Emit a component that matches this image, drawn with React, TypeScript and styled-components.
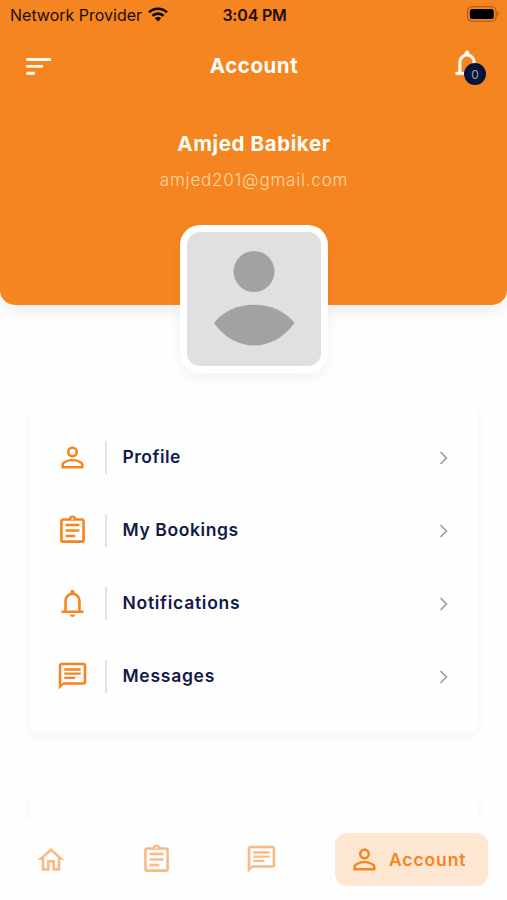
import React from "react";
import styled, { createGlobalStyle } from "styled-components";

const ORANGE = "#f58520";
const NAVY = "#131a48";

const GlobalStyle = createGlobalStyle`
  * { box-sizing: border-box; }
  html, body { margin: 0; background: #fefefe; }
  body { font-family: Inter, "Open Sans", sans-serif; overflow: hidden; }
`;

const Screen = styled.div`
  width: 507px;
  height: 900px;
  display: flex;
  flex-direction: column;
  overflow: hidden;
  background: #fefefe;
`;

const Header = styled.header`
  flex: none;
  height: 305px;
  background: ${ORANGE};
  border-radius: 0 0 15px 15px;
  box-shadow: 0 6px 14px rgba(20, 40, 50, 0.08);
`;

const StatusBar = styled.div`
  height: 30px;
  display: grid;
  grid-template-columns: 1fr auto 1fr;
  align-items: center;
  padding: 1px 8px 0 10px;
  color: #1d0d02;
`;

const Carrier = styled.div`
  display: flex;
  align-items: center;
  gap: 6px;
  svg { margin-top: -2px; }
`;

const BatterySlot = styled.div`
  display: flex;
  justify-content: flex-end;
  margin-top: -3px;
`;

const Label = styled.span<{ $size: number; $weight?: number; $spacing?: number; $color?: string }>`
  font-size: ${(p) => p.$size}px;
  font-weight: ${(p) => p.$weight ?? 400};
  letter-spacing: ${(p) => p.$spacing ?? 0}px;
  color: ${(p) => p.$color ?? "inherit"};
  line-height: 1.2;
  white-space: nowrap;
`;

const TitleBar = styled.div`
  height: 72px;
  display: grid;
  grid-template-columns: 1fr auto 1fr;
  align-items: center;
  padding: 0 21px 0 26px;
  color: #fffdf8;
`;

const Title = styled(Label)`
  margin: 1px 4px 0 0;
`;

const BellButton = styled.div`
  position: relative;
  justify-self: end;
  width: 36px;
  height: 36px;
  svg { display: block; }
`;

const Badge = styled.span`
  position: absolute;
  right: 0;
  bottom: -1px;
  width: 22px;
  height: 22px;
  border-radius: 50%;
  display: flex;
  align-items: center;
  justify-content: center;
  background: #091238;
  color: #9aa0b8;
  font-size: 12px;
`;

const Identity = styled.div`
  display: flex;
  flex-direction: column;
  align-items: center;
  gap: 13px;
  padding: 30px 0 0 1px;
  color: #fffdf8;
`;

const Avatar = styled.div`
  flex: none;
  align-self: center;
  width: 148px;
  height: 148px;
  margin-top: -80px;
  padding: 7px;
  border-radius: 20px;
  background: #fff;
  box-shadow: 0 5px 14px rgba(20, 40, 50, 0.05);
  z-index: 1;
  svg { display: block; border-radius: 13px; background: #e0e0e0; }
`;

const Content = styled.main`
  flex: 1;
  min-height: 0;
  overflow: hidden;
  display: flex;
  flex-direction: column;
  gap: 58px;
  padding: 30px 29px 0 30px;
`;

const Card = styled.section<{ $height: number }>`
  flex: none;
  height: ${(p) => p.$height}px;
  padding: 18px 22px 0 26px;
  border-radius: 10px;
  background: #fefefe;
  box-shadow: 0 4px 12px rgba(30, 45, 55, 0.04);
`;

const Row = styled.div`
  height: 73px;
  display: flex;
  align-items: center;
`;

const RowLabel = styled(Label)`
  margin-top: -2px;
`;

const Divider = styled.i`
  width: 1.5px;
  height: 33px;
  margin: 0 16px 0 16px;
  background: #e4e4e6;
`;

const Chevron = styled.svg`
  margin-left: auto;
  margin-top: 1px;
`;

const NavBar = styled.nav`
  flex: none;
  height: 80px;
  display: flex;
  align-items: flex-start;
  padding: 13px 19px 0 35px;
  background: #fefefe;
  z-index: 2;
`;

const NavItem = styled.div<{ $width: number }>`
  width: ${(p) => p.$width}px;
  height: 53px;
  display: flex;
  align-items: center;
  opacity: 0.55;
`;

const ActiveItem = styled.div`
  margin-left: auto;
  width: 153px;
  height: 53px;
  display: flex;
  align-items: center;
  gap: 8px;
  padding-left: 13px;
  border-radius: 12px;
  background: #fde7d2;
`;

const icons = {
  person:
    "M12 5.8a2.2 2.2 0 1 1 0 4.4 2.2 2.2 0 0 1 0-4.4m0 9c2.97 0 6.2 1.48 6.2 2.3v1.1H5.8v-1.1c0-.82 3.23-2.3 6.2-2.3M12 4C9.79 4 8 5.79 8 8s1.79 4 4 4 4-1.79 4-4-1.79-4-4-4zm0 9c-2.67 0-8 1.34-8 4v3h16v-3c0-2.66-5.33-4-8-4z",
  clipboard:
    "M7 15h7v1.9H7zm0-4h10v1.9H7zm0-4h10v1.9H7zM19 3h-4.18C14.4 1.84 13.3 1 12 1c-1.3 0-2.4.84-2.82 2H5c-1.1 0-2 .9-2 2v14c0 1.1.9 2 2 2h14c1.1 0 2-.9 2-2V5c0-1.1-.9-2-2-2zm-7-.25c.41 0 .75.34.75.75s-.34.75-.75.75-.75-.34-.75-.75.34-.75.75-.75zM19.1 19.1H4.9V4.9h14.2z",
  bell:
    "M4 18.9V17h2v-7q0-2.075 1.25-3.687T10.5 4.2v-.7q0-.625.438-1.062T12 2t1.063.438T13.5 3.5v.7q2 .5 3.25 2.113T18 10v7h2v1.9zm8 3q-.825 0-1.412-.587T10.1 20h3.8q0 .725-.487 1.313T12 21.9m-4.1-4.9h8.2V10q0-1.65-1.2-2.85T12 5.9 9.1 7.15 7.9 10z",
  chat:
    "M3.9 3.9h16.2v12.2H5.2l-1.3 1.3V3.9M4 2c-1.1 0-1.99.9-1.99 2L2 21.5 5.5 18H20c1.1 0 2-.9 2-2V4c0-1.1-.9-2-2-2H4zm2 10.1h8v1.75H6zm0-3.05h12v1.75H6zM6 6h12v1.75H6z",
  home: "M12 5.69l5 4.5V18h-2v-6H9v6H7v-7.81l5-4.5M12 3L2 12h3v8h6v-6h2v6h6v-8h3L12 3z",
};

type IconName = keyof typeof icons;

function Icon({
  name,
  size = 33,
  color = ORANGE,
  outline = 0,
}: {
  name: IconName;
  size?: number;
  color?: string;
  outline?: number;
}) {
  return (
    <svg
      width={size}
      height={size}
      viewBox="0 0 24 24"
      fill={color}
      stroke={outline ? color : "none"}
      strokeWidth={outline}
      fillRule={name === "home" ? "nonzero" : "evenodd"}
    >
      <path d={icons[name]} />
    </svg>
  );
}

const menu: { icon: IconName; label: string; spacing: number }[] = [
  { icon: "person", label: "Profile", spacing: 0.5 },
  { icon: "clipboard", label: "My Bookings", spacing: 0.6 },
  { icon: "bell", label: "Notifications", spacing: 0.73 },
  { icon: "chat", label: "Messages", spacing: 0.73 },
];

export default function App() {
  return (
    <>
      <GlobalStyle />
      <Screen>
        <Header>
          <StatusBar>
            <Carrier>
              <Label $size={16}>Network Provider</Label>
              <svg width="20" height="15" viewBox="0 0 20 15" fill="none" stroke="#120800" strokeWidth="2.7">
                <path d="M1.1 5.4a12.7 12.7 0 0 1 17.8 0M4.4 8.9a8 8 0 0 1 11.2 0" />
                <path d="M10 14.5 6.8 11.3a4.6 4.6 0 0 1 6.4 0z" fill="#120800" stroke="none" />
              </svg>
            </Carrier>
            <Label $size={16} $weight={600} $spacing={-0.2}>3:04 PM</Label>
            <BatterySlot>
              <svg width="33" height="16" viewBox="0 0 33 16">
                <rect x="1.5" y="0.7" width="28.6" height="14.6" rx="4.5" fill="none" stroke="#a05a1c" strokeWidth="1.1" />
                <rect x="3.8" y="3" width="24" height="10" rx="2.5" fill="#000" />
                <path d="M31.4 5.8c1.6.6 1.6 3.8 0 4.4z" fill="#a05a1c" />
              </svg>
            </BatterySlot>
          </StatusBar>
          <TitleBar>
            <svg width="25" height="17" viewBox="0 0 25 17" fill="#fffaf0">
              <path d="M.3 0H25v3H.3zM.3 7H17v2.8H.3zM.3 13.8h8.5v2.9H.3z" />
            </svg>
            <Title $size={20.5} $weight={700} $spacing={0.55}>Account</Title>
            <BellButton>
              <Icon name="bell" size={34} color="#fffdf8" outline={0.3} />
              <Badge>0</Badge>
            </BellButton>
          </TitleBar>
          <Identity>
            <Label $size={20.5} $weight={700} $spacing={0.6}>Amjed Babiker</Label>
            <Label $size={17} $weight={300} $spacing={0.8} $color="#ffd5a6">amjed201@gmail.com</Label>
          </Identity>
        </Header>
        <Avatar>
          <svg width="134" height="134" viewBox="0 0 134 134" fill="#a2a2a2">
            <circle cx="67" cy="39.5" r="20.5" />
            <path d="M27 91C45 66.5 89 66.5 107.5 91C86 121 48 121 27 91Z" />
          </svg>
        </Avatar>
        <Content>
          <Card $height={330}>
            {menu.map((item) => (
              <Row key={item.label}>
                <Icon name={item.icon} />
                <Divider />
                <RowLabel $size={17.5} $weight={600} $spacing={item.spacing} $color={NAVY}>
                  {item.label}
                </RowLabel>
                <Chevron width="24" height="24" viewBox="0 0 24 24" fill="none" stroke="#9c9ea2" strokeWidth="1.7">
                  <path d="M8.5 6l5.9 6-5.9 6" />
                </Chevron>
              </Row>
            ))}
          </Card>
          <Card $height={120} />
        </Content>
        <NavBar>
          <NavItem $width={105}><Icon name="home" size={32} /></NavItem>
          <NavItem $width={105}><Icon name="clipboard" /></NavItem>
          <NavItem $width={60}><Icon name="chat" /></NavItem>
          <ActiveItem>
            <Icon name="person" />
            <Label $size={17.5} $weight={600} $spacing={0.9} $color={ORANGE}>Account</Label>
          </ActiveItem>
        </NavBar>
      </Screen>
    </>
  );
}
